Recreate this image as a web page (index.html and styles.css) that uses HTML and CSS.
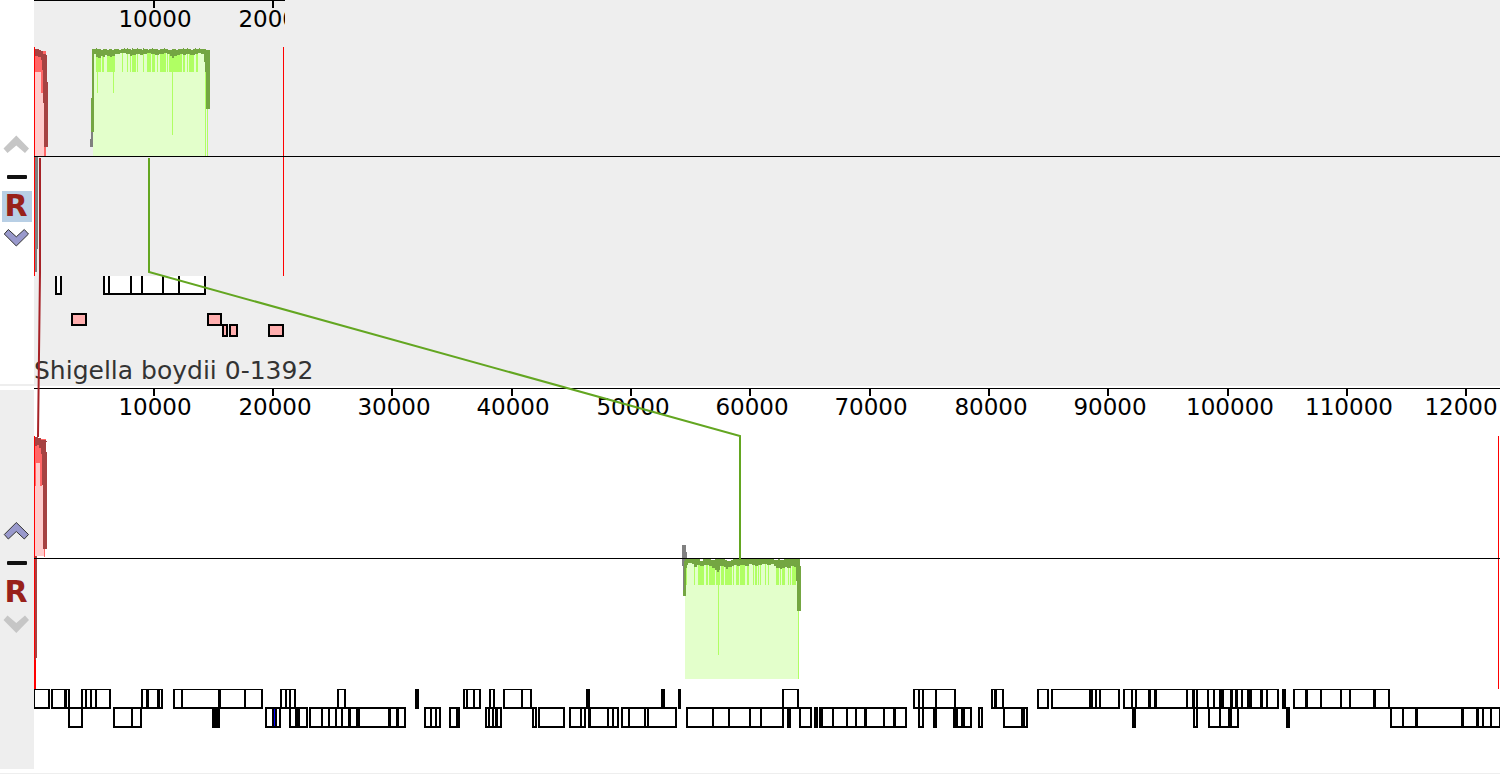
FILE: index.html
```html
<!DOCTYPE html>
<html lang="en">
<head>
<meta charset="utf-8">
<title>Genome alignment</title>
<link rel="stylesheet" href="styles.css">
</head>
<body>
<main class="viewer">
  <section class="panel" aria-label="Shigella boydii 0-1392">
    <nav class="tools tools-selected">
      <button class="tool" type="button" aria-label="Move up" disabled><svg class="icon" viewBox="0 0 30 31"><path class="chevron-off" d="M14.300 6.500L27 19.500L23 24L14.300 16.500L5.500 24L1.500 19.500Z"/></svg></button>
      <button class="tool" type="button" aria-label="Hide genome"><svg class="icon" viewBox="0 0 30 31"><rect class="dash" x="5" y="15" width="20" height="4" rx="1"/></svg></button>
      <button class="tool tool-letter tool-active" type="button" aria-label="Set reference">R</button>
      <button class="tool" type="button" aria-label="Move down"><svg class="icon" viewBox="0 0 30 31"><path class="chevron" d="M6.300 7.500L14.300 14.800L22.300 7.500L26.500 12L14.300 24L2.300 12Z"/></svg></button>
    </nav>
    <svg class="plot plot-reference" aria-hidden="true">
      <defs><clipPath id="sequence-end"><rect x="34" y="0" width="251" height="40"/></clipPath></defs>
      <g transform="translate(-34 0)">
        <g clip-path="url(#sequence-end)">
          <path class="axis" d="M34 0H285V1H34ZM153 1H155V8H153ZM272 1H274V8H272Z"/>
          <text class="label" x="155" y="27">10000</text>
          <text class="label" x="275" y="27">20000</text>
        </g>
        <g class="crisp">
          <path class="pink-light" d="M35 70H45V156H35Z"/>
          <path class="pink" d="M35 51H46V72H35ZM41 72H44V93H41ZM44 146H46V156H44Z"/>
          <path class="maroon" d="M35 49H39V50H41V51H43V54H46V55H47V82H48V147H44V103H43V70H42V60H41V57H38V56H35Z"/>
          <path class="red" d="M34 47H35V276H34ZM283 47H284V276H283Z"/>
          <path class="grey" d="M35 157H38V249H37V272H35Z"/>

          <path class="lime-light" d="M93 52H206V156H93Z"/>
          <path class="lime" d="M96 52H101V72H96ZM102 52H104V72H102ZM107 52H115V72H107ZM122 52H123V72H122ZM127 52H128V72H127ZM130 52H131V72H130ZM132 52H136V72H132ZM137 52H138V72H137ZM143 52H144V72H143ZM147 52H151V72H147ZM152 52H155V72H152ZM157 52H158V72H157ZM160 52H166V72H160ZM167 52H168V72H167ZM169 52H182V72H169ZM183 52H185V72H183ZM187 52H188V72H187ZM189 52H194V72H189ZM196 52H198V72H196ZM97 72H98V93H97ZM113 72H114V93H113ZM172 72H173V135H172ZM205 72H206V156H205ZM207 109H208V156H207Z"/>
          <path class="green" d="M92 49H96V48H97V49H101V50H103V49H107V50H109V49H112V50H114V49H119V50H121V49H124V48H125V49H127V48H128V49H131V50H132V48H133V49H137V48H138V49H142V50H143V48H144V49H148V50H149V49H152V48H153V49H158V50H160V49H164V48H165V49H168V50H172V49H176V50H178V49H183V48H184V49H187V48H188V49H191V50H193V49H195V48H196V49H199V48H200V49H206V50H210V109H206V72H205V62H204V54H201V53H198V54H195V55H190V54H186V55H183V54H180V55H177V56H174V58H172V56H170V54H167V53H164V54H159V55H155V54H151V53H147V54H143V55H140V54H136V55H132V56H130V54H126V53H120V54H115V56H112V57H110V56H107V55H105V57H103V56H101V58H98V57H96V54H94V132H91V98H92Z"/>
          <path class="grey" d="M91 132H93V147H90V139H91Z"/>

          <path class="ink" d="M55 276H62V295H55ZM103 276H206V295H103Z"/>
          <path class="cell" d="M57 276H60V293H57ZM105 276H108V293H105ZM110 276H130V293H110ZM132 276H141V293H132ZM143 276H162V293H143ZM164 276H178V293H164ZM180 276H204V293H180Z"/>
          <g class="rna">
            <rect x="72" y="314" width="14" height="11"/>
            <rect x="208" y="314" width="13" height="11"/>
            <rect x="223" y="325" width="4" height="11"/>
            <rect x="230" y="325" width="7" height="11"/>
            <rect x="269" y="325" width="14" height="11"/>
          </g>
        </g>
        <rect class="axis" x="34" y="156" width="100%" height="1"/>
        <text class="genome-name" x="34" y="379">Shigella boydii 0-1392</text>
      </g>
    </svg>
  </section>

  <section class="panel panel-last" aria-label="Second genome">
    <nav class="tools tools-plain">
      <button class="tool" type="button" aria-label="Move up"><svg class="icon" viewBox="0 0 30 31"><path class="chevron" d="M14.300 7.500L26.500 19.500L22.300 24L14.300 16.500L6.300 24L2.300 19.500Z"/></svg></button>
      <button class="tool" type="button" aria-label="Hide genome"><svg class="icon" viewBox="0 0 30 31"><rect class="dash" x="5" y="15" width="20" height="4" rx="1"/></svg></button>
      <button class="tool tool-letter" type="button" aria-label="Set reference">R</button>
      <button class="tool" type="button" aria-label="Move down" disabled><svg class="icon" viewBox="0 0 30 31"><path class="chevron-off" d="M5.500 7.500L14.300 15L23 7.500L27 12L14.300 25L1.500 12Z"/></svg></button>
    </nav>
    <svg class="plot" aria-hidden="true">
      <g transform="translate(-34 -386)">
        <rect class="axis" x="34" y="388" width="100%" height="1"/>
        <path class="axis" d="M153 389H155V396H153ZM272 389H274V396H272ZM391 389H393V396H391ZM511 389H513V396H511ZM630 389H632V396H630ZM749 389H751V396H749ZM869 389H871V396H869ZM988 389H990V396H988ZM1107 389H1109V396H1107ZM1227 389H1229V396H1227ZM1346 389H1348V396H1346ZM1465 389H1467V396H1465Z"/>
        <g class="label">
          <text x="155" y="415">10000</text>
          <text x="275" y="415">20000</text>
          <text x="394" y="415">30000</text>
          <text x="513" y="415">40000</text>
          <text x="633" y="415">50000</text>
          <text x="752" y="415">60000</text>
          <text x="871" y="415">70000</text>
          <text x="991" y="415">80000</text>
          <text x="1110" y="415">90000</text>
          <text x="1230" y="415">100000</text>
          <text x="1349" y="415">110000</text>
          <text x="1461" y="415">12000</text>
        </g>
        <g class="crisp">
          <path class="pink-light" d="M35 462H44V556H35Z"/>
          <path class="pink" d="M35 439H46V463H35ZM35 463H36V486H35ZM40 463H42V486H40ZM44 549H45V557H44Z"/>
          <path class="maroon" d="M35 437H38V438H41V440H46V441H47V442H46V452H47V549H43V485H42V454H41V448H39V445H37V446H35Z"/>
          <path class="maroon" d="M35 556H37V658H36V683H35Z"/>
          <path class="red" d="M34 436H35V689H34ZM35 660H36V689H35ZM1498 436H1499V689H1498Z"/>

          <path class="lime-light" d="M685 563H799V679H685Z"/>
          <path class="lime" d="M686 563H687V585H686ZM694 563H695V585H694ZM698 563H704V585H698ZM706 563H708V585H706ZM709 563H715V585H709ZM716 563H720V585H716ZM721 563H724V585H721ZM725 563H732V585H725ZM733 563H734V585H733ZM736 563H739V585H736ZM740 563H745V585H740ZM747 563H749V585H747ZM753 563H754V585H753ZM755 563H757V585H755ZM758 563H759V585H758ZM760 563H761V585H760ZM765 563H766V585H765ZM768 563H769V585H768ZM776 563H779V585H776ZM780 563H781V585H780ZM782 563H785V585H782ZM788 563H789V585H788ZM790 563H791V585H790ZM792 563H796V585H792ZM718 585H719V655H718ZM798 611H799V679H798Z"/>
          <path class="green" d="M685 559H700V561H703V559H711V560H715V559H725V560H727V561H731V560H733V559H774V560H778V559H780V560H784V559H800V566H801V611H797V581H796V567H794V566H791V568H787V567H785V568H782V569H780V568H776V566H774V564H771V565H767V564H762V565H758V566H755V565H752V564H749V566H745V565H740V566H737V565H734V566H732V567H728V569H726V567H724V566H720V570H719V572H717V570H715V568H712V566H709V565H704V566H700V565H697V567H694V564H692V563H688V565H687V568H686V596H683V575H684V561H685Z"/>
          <path class="grey" d="M682 545H686V552H687V559H685V561H684V590H683V566H682Z"/>
        </g>
        <rect class="axis" x="34" y="558" width="100%" height="1"/>

        <g class="genes crisp">
          <path class="gene-box" d="M34 699H50M51 699H70M81 699H111M141 699H163M173 699H263M280 699H296M337 699H346M415 699H419M463 699H481M489 699H495M503 699H532M586 699H590M661 699H665M678 699H681M782 699H799M913 699H956M991 699H1004M1037 699H1049M1051 699H1120M1123 699H1279M1282 699H1286M1293 699H1390"/>
          <path class="gene-box gene-box-reverse" d="M68 717.500H83M113 717.500H142M212 717.500H220M265 717.500H281M289 717.500H308M309 717.500H406M424 717.500H441M449 717.500H460M485 717.500H502M532 717.500H537M538 717.500H565M569 717.500H586M588 717.500H619M621 717.500H677M686 717.500H784M787 717.500H791M799 717.500H812M814 717.500H818M819 717.500H907M918 717.500H924M933 717.500H937M953 717.500H972M978 717.500H983M1003 717.500H1028M1132 717.500H1136M1193 717.500H1198M1208 717.500H1239M1286 717.500H1290M1390 717.500H1500"/>
          <path class="gene-cell" d="M35 698.500H48M53 698.500H64M67 698.500H68M83 698.500H85M87 698.500H90M92 698.500H95M97 698.500H109M143 698.500H146M149 698.500H157M160 698.500H161M175 698.500H181M183 698.500H218M221 698.500H244M246 698.500H261M282 698.500H285M287 698.500H289M291 698.500H294M339 698.500H344M465 698.500H466M468 698.500H473M475 698.500H479M491 698.500H493M505 698.500H521M523 698.500H530M784 698.500H797M915 698.500H918M920 698.500H922M924 698.500H935M937 698.500H954M993 698.500H994M997 698.500H1002M1039 698.500H1047M1053 698.500H1089M1093 698.500H1095M1097 698.500H1099M1101 698.500H1118M1125 698.500H1131M1133 698.500H1135M1137 698.500H1148M1151 698.500H1154M1157 698.500H1186M1188 698.500H1192M1195 698.500H1196M1198 698.500H1207M1209 698.500H1213M1215 698.500H1219M1224 698.500H1230M1233 698.500H1235M1238 698.500H1241M1243 698.500H1247M1252 698.500H1260M1263 698.500H1266M1268 698.500H1277M1295 698.500H1305M1308 698.500H1320M1322 698.500H1340M1342 698.500H1349M1351 698.500H1373M1376 698.500H1388"/>
          <path class="gene-cell" d="M70 717.500H81M115 717.500H131M133 717.500H140M267 717.500H272M277 717.500H279M291 717.500H295M300 717.500H306M311 717.500H321M323 717.500H328M330 717.500H335M337 717.500H341M343 717.500H348M351 717.500H356M360 717.500H388M391 717.500H396M399 717.500H404M426 717.500H430M432 717.500H435M437 717.500H439M451 717.500H456M487 717.500H488M490 717.500H492M494 717.500H495M498 717.500H500M534 717.500H535M540 717.500H563M571 717.500H580M582 717.500H584M591 717.500H607M609 717.500H612M614 717.500H617M623 717.500H628M630 717.500H644M646 717.500H647M649 717.500H675M688 717.500H712M714 717.500H728M730 717.500H749M751 717.500H760M762 717.500H782M801 717.500H810M823 717.500H832M834 717.500H846M848 717.500H855M857 717.500H864M867 717.500H883M885 717.500H893M896 717.500H905M920 717.500H922M958 717.500H961M965 717.500H970M980 717.500H981M1005 717.500H1021M1025 717.500H1026M1195 717.500H1196M1210 717.500H1219M1221 717.500H1228M1232 717.500H1237M1392 717.500H1402M1404 717.500H1415M1418 717.500H1461M1464 717.500H1476M1479 717.500H1482M1484 717.500H1490M1492 717.500H1499"/>
          <path class="gene-mark" d="M274 717.500H275"/>
        </g>
      </g>
    </svg>
  </section>

  <svg class="links" aria-hidden="true">
    <path class="link link-red" d="M40 158V272L38 437"/>
    <path class="link link-green" d="M149 158V272L740 436V560"/>
  </svg>
</main>
</body>
</html>
```
FILE: styles.css
```css
body {
  margin: 0;
  background: #fff;
  font-family: "DejaVu Sans", sans-serif;
}

.viewer {
  position: relative;
  display: flex;
  flex-direction: column;
  border-bottom: 1px solid #eee;
}

.panel {
  display: flex;
  height: 386px;
}

.panel-last {
  height: 387px;
}

.tools {
  box-sizing: border-box;
  flex: 0 0 34px;
  display: flex;
  flex-direction: column;
  align-items: flex-start;
  padding: 129px 2px 0;
}

.tools-selected {
  background: #fff;
  border-bottom: 2px solid #eee;
}

.tools-plain {
  padding-top: 125px;
  background: #eee;
  border-top: 4px solid #fff;
  border-bottom: 4px solid #fff;
}

.tool {
  width: 30px;
  height: 31px;
  padding: 0;
  border: 0;
  background: transparent;
  color: #98211a;
}

.tool-letter {
  padding: 0 2px 2px 0;
  font: bold 30px/29px "DejaVu Sans", sans-serif;
  text-align: center;
}

.tool-active {
  background: #b8cfe5;
}

.icon {
  display: block;
  width: 30px;
  height: 31px;
}

.chevron {
  fill: #9999cc;
  stroke: #333;
  stroke-width: 1;
}

.chevron-off {
  fill: #c6c6c6;
}

.dash {
  fill: #111;
}

.plot {
  flex: 1;
  min-width: 0;
  height: 100%;
  overflow: hidden;
}

.plot-reference {
  background: #eee;
}

.crisp {
  shape-rendering: crispEdges;
}

.axis,
.ink {
  fill: #000;
}

.label {
  fill: #000;
  font-size: 23px;
  text-anchor: middle;
}

.genome-name {
  fill: #333;
  font-size: 25px;
}

.red { fill: #f00; }
.pink-light { fill: #fcc; }
.pink { fill: #f66; }
.maroon { fill: #a64242; }
.grey { fill: #808080; }
.lime-light { fill: #e3ffcb; }
.lime { fill: #b0ff63; }
.green { fill: #74a642; }
.cell { fill: #fff; }

.rna {
  fill: #ffafaf;
  stroke: #000;
  stroke-width: 2;
}

.gene-box {
  stroke: #000;
  stroke-width: 20;
}

.gene-box-reverse {
  stroke-width: 21;
}

.gene-cell {
  stroke: #fff;
  stroke-width: 17;
}

.gene-mark {
  stroke: #00f;
  stroke-width: 17;
}

.links {
  position: absolute;
  inset: 0;
  width: 100%;
  height: 100%;
  pointer-events: none;
}

.link {
  fill: none;
  stroke-width: 2;
}

.link-red { stroke: #a62126; }
.link-green { stroke: #63a621; }
```
